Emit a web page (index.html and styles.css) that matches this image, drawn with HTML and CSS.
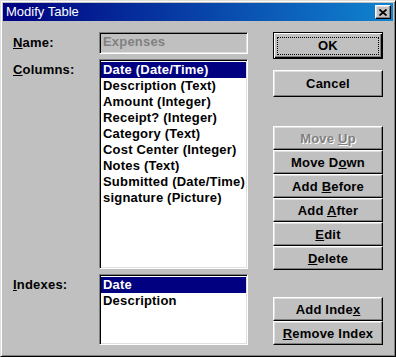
FILE: index.html
```html
<!DOCTYPE html>
<html lang="en">
<head>
    <meta charset="UTF-8">
    <meta name="viewport" content="width=device-width, initial-scale=1.0">
    <title>Modify Table</title>
    <link rel="stylesheet" href="styles.css">
</head>
<body>
    <div class="window">
        <div class="titlebar">
            <span class="title">Modify Table</span>
            <button type="button" class="close-btn">
                <svg width="8" height="7" viewBox="0 0 8 7"><path d="M0.5 0.5L7.5 6.5M7.5 0.5L0.5 6.5" stroke="#000" stroke-width="1.7" fill="none"/></svg>
            </button>
        </div>

        <div class="dialog">
            <div class="fields">
                <label class="field-label name-label"><u>N</u>ame:</label>
                <div class="textbox disabled">Expenses</div>

                <label class="field-label"><u>C</u>olumns:</label>
                <ul class="listbox">
                    <li class="selected">Date (Date/Time)</li>
                    <li>Description (Text)</li>
                    <li>Amount (Integer)</li>
                    <li>Receipt? (Integer)</li>
                    <li>Category (Text)</li>
                    <li>Cost Center (Integer)</li>
                    <li>Notes (Text)</li>
                    <li>Submitted (Date/Time)</li>
                    <li>signature (Picture)</li>
                </ul>

                <label class="field-label"><u>I</u>ndexes:</label>
                <ul class="listbox">
                    <li class="selected">Date</li>
                    <li>Description</li>
                </ul>
            </div>

            <div class="buttons">
                <button type="button" class="btn tall default-btn">OK</button>
                <button type="button" class="btn tall cancel-btn">Cancel</button>

                <div class="btn-stack column-btns">
                    <button type="button" class="btn" disabled>Move <u>U</u>p</button>
                    <button type="button" class="btn">Move D<u>o</u>wn</button>
                    <button type="button" class="btn">Add <u>B</u>efore</button>
                    <button type="button" class="btn">Add <u>A</u>fter</button>
                    <button type="button" class="btn"><u>E</u>dit</button>
                    <button type="button" class="btn"><u>D</u>elete</button>
                </div>

                <div class="btn-stack index-btns">
                    <button type="button" class="btn">Add Inde<u>x</u></button>
                    <button type="button" class="btn"><u>R</u>emove Index</button>
                </div>
            </div>
        </div>
    </div>
</body>
</html>
```

FILE: styles.css
```css
* {
    box-sizing: border-box;
}
body {
    margin: 0;
    background: #c0c0c0;
    font-family: "Liberation Sans", Arial, sans-serif;
    font-size: 13px;
}
.window {
    width: 396px;
    height: 357px;
    padding: 2px;
    background: #c0c0c0;
    border: 1px solid;
    border-color: #dfdfdf #000 #000 #dfdfdf;
    box-shadow: inset 1px 1px #fff, inset -1px -1px #808080;
}
.titlebar {
    height: 18px;
    display: flex;
    align-items: center;
    justify-content: space-between;
    padding: 0 2px 0 3px;
    background: linear-gradient(to right, #000080, #1084d0);
    color: #fff;
}
.title {
    font-size: 13px;
    line-height: 18px;
}
.close-btn {
    width: 16px;
    height: 14px;
    padding: 0;
    display: flex;
    align-items: center;
    justify-content: center;
    background: #c0c0c0;
    border: 1px solid;
    border-color: #fff #000 #000 #fff;
    box-shadow: inset -1px -1px #808080, inset 1px 1px #dfdfdf;
}
.dialog {
    display: flex;
    padding: 11px 10px 0 10px;
}
.fields {
    display: grid;
    grid-template-columns: 86px 149px;
    grid-template-rows: 22px 210px 71px;
    row-gap: 5px;
}
.field-label {
    font-weight: bold;
    letter-spacing: 0.2px;
    line-height: 16px;
    padding-top: 3px;
    color: #000;
}
.name-label {
    align-self: center;
    padding-top: 0;
}
.textbox {
    padding: 0 3px;
    line-height: 18px;
    font-weight: bold;
    letter-spacing: 0.2px;
    border: 1px solid;
    border-color: #808080 #fff #fff #808080;
    box-shadow: inset 1px 1px #000, inset -1px -1px #dfdfdf;
    background: #fff;
}
.textbox.disabled {
    background: #c0c0c0;
    color: #808080;
}
.listbox {
    list-style: none;
    margin: 0;
    padding: 2px 1px;
    background: #fff;
    border: 1px solid;
    border-color: #808080 #fff #fff #808080;
    box-shadow: inset 1px 1px #000, inset -1px -1px #dfdfdf;
    overflow: hidden;
}
.listbox li {
    height: 16px;
    line-height: 16px;
    padding-left: 2px;
    font-weight: bold;
    letter-spacing: 0.2px;
    white-space: nowrap;
}
.listbox li.selected {
    background: #000080;
    color: #fff;
}
.buttons {
    display: flex;
    flex-direction: column;
    margin-left: 25px;
    width: 110px;
}
.btn {
    position: relative;
    width: 110px;
    height: 24px;
    padding: 0;
    font-family: "Liberation Sans", Arial, sans-serif;
    font-size: 13px;
    font-weight: bold;
    letter-spacing: 0.2px;
    color: #000;
    background: #c0c0c0;
    border: 1px solid;
    border-color: #fff #000 #000 #fff;
    box-shadow: inset -1px -1px #808080, inset 1px 1px #dfdfdf;
}
.btn u {
    text-underline-offset: 1px;
}
.btn:disabled {
    color: #808080;
    text-shadow: 1px 1px #fff;
}
.btn.tall {
    height: 27px;
}
.default-btn {
    border-color: #000;
    box-shadow: inset 1px 1px #fff, inset -1px -1px #000, inset -2px -2px #808080;
}
.default-btn::after {
    content: "";
    position: absolute;
    top: 4px;
    left: 3px;
    right: 3px;
    bottom: 3px;
    border: 1px dotted #000;
}
.cancel-btn {
    margin-top: 11px;
}
.btn-stack {
    display: flex;
    flex-direction: column;
}
.column-btns {
    margin-top: 29px;
}
.index-btns {
    margin-top: 27px;
}
```
